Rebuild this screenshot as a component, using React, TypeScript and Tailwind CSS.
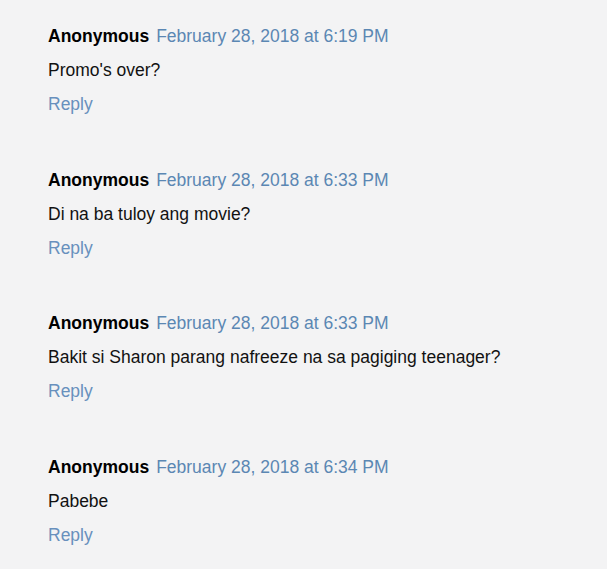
import React from 'react';

const comments = [
  { author: 'Anonymous', date: 'February 28, 2018 at 6:19 PM', text: "Promo's over?" },
  { author: 'Anonymous', date: 'February 28, 2018 at 6:33 PM', text: 'Di na ba tuloy ang movie?' },
  { author: 'Anonymous', date: 'February 28, 2018 at 6:33 PM', text: 'Bakit si Sharon parang nafreeze na sa pagiging teenager?' },
  { author: 'Anonymous', date: 'February 28, 2018 at 6:34 PM', text: 'Pabebe' },
];

const App: React.FC = () => {
  return (
    <div className="min-h-screen w-full bg-[#f3f3f4] pt-[19px] pl-[48px] text-[17.5px] leading-[34px] text-[#111]" style={{ fontFamily: '"Liberation Sans", Arial, sans-serif' }}>
      {comments.map((c, i) => (
        <div key={i} className="h-[143.5px]">
          <div className="flex items-baseline">
            <span className="font-bold text-black">{c.author}</span>
            <a className="ml-[7px] text-[#5b87b3]">{c.date}</a>
          </div>
          <p>{c.text}</p>
          <a className="text-[#6890bd]">Reply</a>
        </div>
      ))}
    </div>
  );
};

export default App;
